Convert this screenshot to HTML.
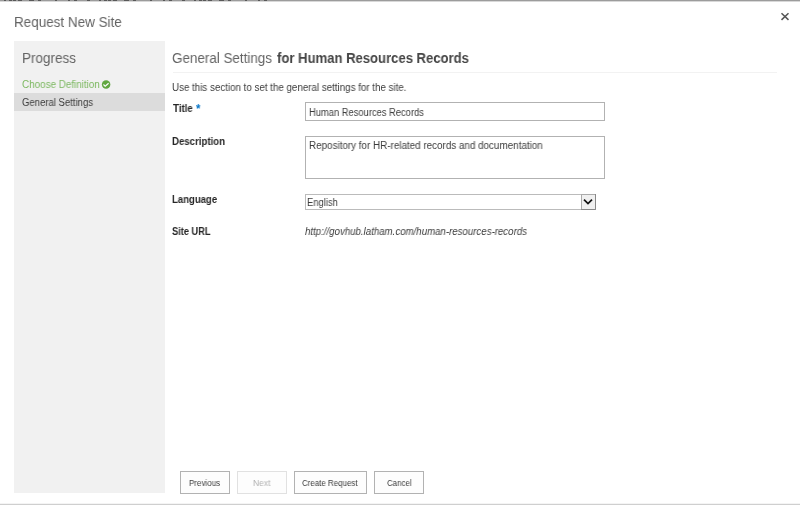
<!DOCTYPE html>
<html lang="en">
<head>
<meta charset="utf-8">
<title>Request New Site</title>
<style>
  html, body { margin: 0; padding: 0; }
  body {
    width: 800px; height: 505px; overflow: hidden; position: relative;
    background: #fff; color: #444;
    font-family: "Liberation Sans", sans-serif; font-size: 9.5px;
  }
  .abs { position: absolute; white-space: nowrap; }
  .tx { transform-origin: 0 0; will-change: transform; filter: blur(0.3px); }
  .topline { left: 0; top: 0; width: 800px; height: 2px; background: linear-gradient(#9c9c9c 0, #9c9c9c 1px, #d8d8d8 1px, #d8d8d8 2px); }
  .topdash { left: 0; top: 0; width: 276px; height: 1px; background: repeating-linear-gradient(90deg, transparent 0, transparent 4px, #585858 4px, #585858 6px, transparent 6px, transparent 9px, #585858 9px, #585858 12px, transparent 12px, transparent 13px, #585858 13px, #585858 16px, transparent 16px, transparent 18px, #585858 18px, #585858 22px, transparent 22px, transparent 29px, #585858 29px, #585858 34px, transparent 34px, transparent 38px, #585858 38px, #585858 41px, transparent 41px, transparent 55px, #585858 55px, #585858 57.5px, transparent 57.5px, transparent 68px, #585858 68px, #585858 70px, transparent 70px, transparent 74px, #585858 74px, #585858 77px, transparent 77px, transparent 87.5px, #585858 87.5px, #585858 90.5px, transparent 90.5px, transparent 95px); }
  .botline { left: 0; top: 503px; width: 800px; height: 2px; background: linear-gradient(#f4f4f4 0, #f4f4f4 1px, #cfcfcf 1px, #cfcfcf 2px); }
  .big { font-size: 14px; line-height: 18px; color: #646464; }
  .sm { font-size: 10px; line-height: 12px; color: #3c3c3c; }
  .close { left: 779px; top: 11px; width: 12px; height: 12px; }
  .side { left: 14px; top: 41px; width: 151px; height: 452px; background: #f1f1f1; }
  #t3 { color: #7cb860; }
  .sel { left: 14px; top: 93px; width: 151px; height: 18px; background: #dcdcdc; }
  .check { left: 101px; top: 80px; width: 10px; height: 10px; }
  #t5b { color: #454545; font-weight: bold; }
  .hr { left: 173px; top: 72px; width: 604px; height: 1px; background: #f2f2f2; }
  .lbl { font-weight: bold; color: #262626; }
  #t7s { color: #0072c6; font-size: 13px; line-height: 14px; }
  .box { left: 305px; width: 298px; border: 1px solid #b2b2b2; background: #fff; }
  #t14 { font-style: italic; }
  .btn { top: 471px; height: 21px; border: 1px solid #b2b2b2; background: #fdfdfd; }
  .btn.dis { border-color: #e1e1e1; }
  .bt { font-size: 8.8px; line-height: 10px; }
  #t16 { color: #b1b1b1; }
  #t1 { left: 14px; top: 13px; transform: scaleX(0.9616); }
  #t2 { left: 22px; top: 49px; transform: scaleX(0.9638); }
  #t3 { left: 22px; top: 79px; transform: scaleX(0.9869); }
  #t4 { left: 22px; top: 97px; transform: scaleX(0.9534); }
  #t5 { left: 172px; top: 49px; transform: scaleX(0.9584); }
  #t5b { left: 277px; top: 49px; transform: scaleX(0.9345); }
  #t6 { left: 172px; top: 82px; transform: scaleX(0.9764); }
  #t7 { left: 173px; top: 103px; transform: scaleX(0.9681); }
  #t8 { left: 309px; top: 107px; transform: scaleX(0.9358); }
  #t9 { left: 172px; top: 136px; transform: scaleX(0.9636); }
  #t10 { left: 309px; top: 140px; transform: scaleX(0.9846); }
  #t11 { left: 172px; top: 194px; transform: scaleX(0.9546); }
  #t12 { left: 307px; top: 197px; transform: scaleX(0.94); }
  #t13 { left: 172px; top: 226px; transform: scaleX(0.9265); }
  #t14 { left: 305px; top: 226px; transform: scaleX(0.967); }
  #t15 { left: 189px; top: 478px; transform: scaleX(0.9097); }
  #t16 { left: 253px; top: 478px; transform: scaleX(0.9639); }
  #t17 { left: 302px; top: 478px; transform: scaleX(0.901); }
  #t18 { left: 387px; top: 478px; transform: scaleX(0.8984); }
  #t7s { left: 196px; top: 102px; transform: scaleX(0.863); }
</style>
</head>
<body>
  <div class="abs topline"></div>
  <div class="abs topdash"></div>
  <div class="abs tx big" id="t1">Request New Site</div>
  <svg class="abs close" viewBox="0 0 12 12"><path d="M2.5 2.2 L9.5 8.9 M9.5 2.2 L2.5 8.9" stroke="#555" stroke-width="1.5" fill="none"/></svg>

  <div class="abs side"></div>
  <div class="abs tx big" id="t2">Progress</div>
  <div class="abs tx sm" id="t3">Choose Definition</div>
  <svg class="abs check" viewBox="0 0 10 10"><circle cx="5.1" cy="4.55" r="4.25" fill="#62a741"/><path d="M2.5 4.5 L4.2 6.3 L7.6 3.3" stroke="#fff" stroke-width="1.15" fill="none"/></svg>
  <div class="abs sel"></div>
  <div class="abs tx sm" id="t4">General Settings</div>

  <div class="abs tx big" id="t5">General Settings</div>
  <div class="abs tx big" id="t5b">for Human Resources Records</div>
  <div class="abs hr"></div>
  <div class="abs tx sm" id="t6">Use this section to set the general settings for the site.</div>

  <div class="abs tx sm lbl" id="t7">Title</div>
  <div class="abs tx sm lbl" id="t7s">*</div>
  <div class="abs box" style="top:102px;height:17px"></div>
  <div class="abs tx sm" id="t8">Human Resources Records</div>

  <div class="abs tx sm lbl" id="t9">Description</div>
  <div class="abs box" style="top:136px;height:41px"></div>
  <div class="abs tx sm" id="t10">Repository for HR-related records and documentation</div>

  <div class="abs tx sm lbl" id="t11">Language</div>
  <div class="abs box" style="top:194px;height:14px;width:289px;border-color:#bbb"></div>
  <div class="abs tx sm" id="t12">English</div>
  <svg class="abs" style="left:581px;top:194px;width:15px;height:16px" viewBox="0 0 15 16"><rect x="0.5" y="0.5" width="14" height="15" fill="#f0f0f0" stroke="#aaa" stroke-width="1"/><path d="M14.5 0 V15.5 H0" fill="none" stroke="#888" stroke-width="1"/><path d="M3 5.6 L7 9.6 L11 5.6" stroke="#111" stroke-width="1.7" fill="none"/></svg>

  <div class="abs tx sm lbl" id="t13">Site URL</div>
  <div class="abs tx sm" id="t14">http://govhub.latham.com/human-resources-records</div>

  <div class="abs btn" style="left:180px;width:48px"></div>
  <div class="abs btn dis" style="left:237px;width:48px"></div>
  <div class="abs btn" style="left:294px;width:71px"></div>
  <div class="abs btn" style="left:374px;width:48px"></div>
  <div class="abs tx sm bt" id="t15">Previous</div>
  <div class="abs tx sm bt" id="t16">Next</div>
  <div class="abs tx sm bt" id="t17">Create Request</div>
  <div class="abs tx sm bt" id="t18">Cancel</div>

  <div class="abs botline"></div>
</body>
</html>
